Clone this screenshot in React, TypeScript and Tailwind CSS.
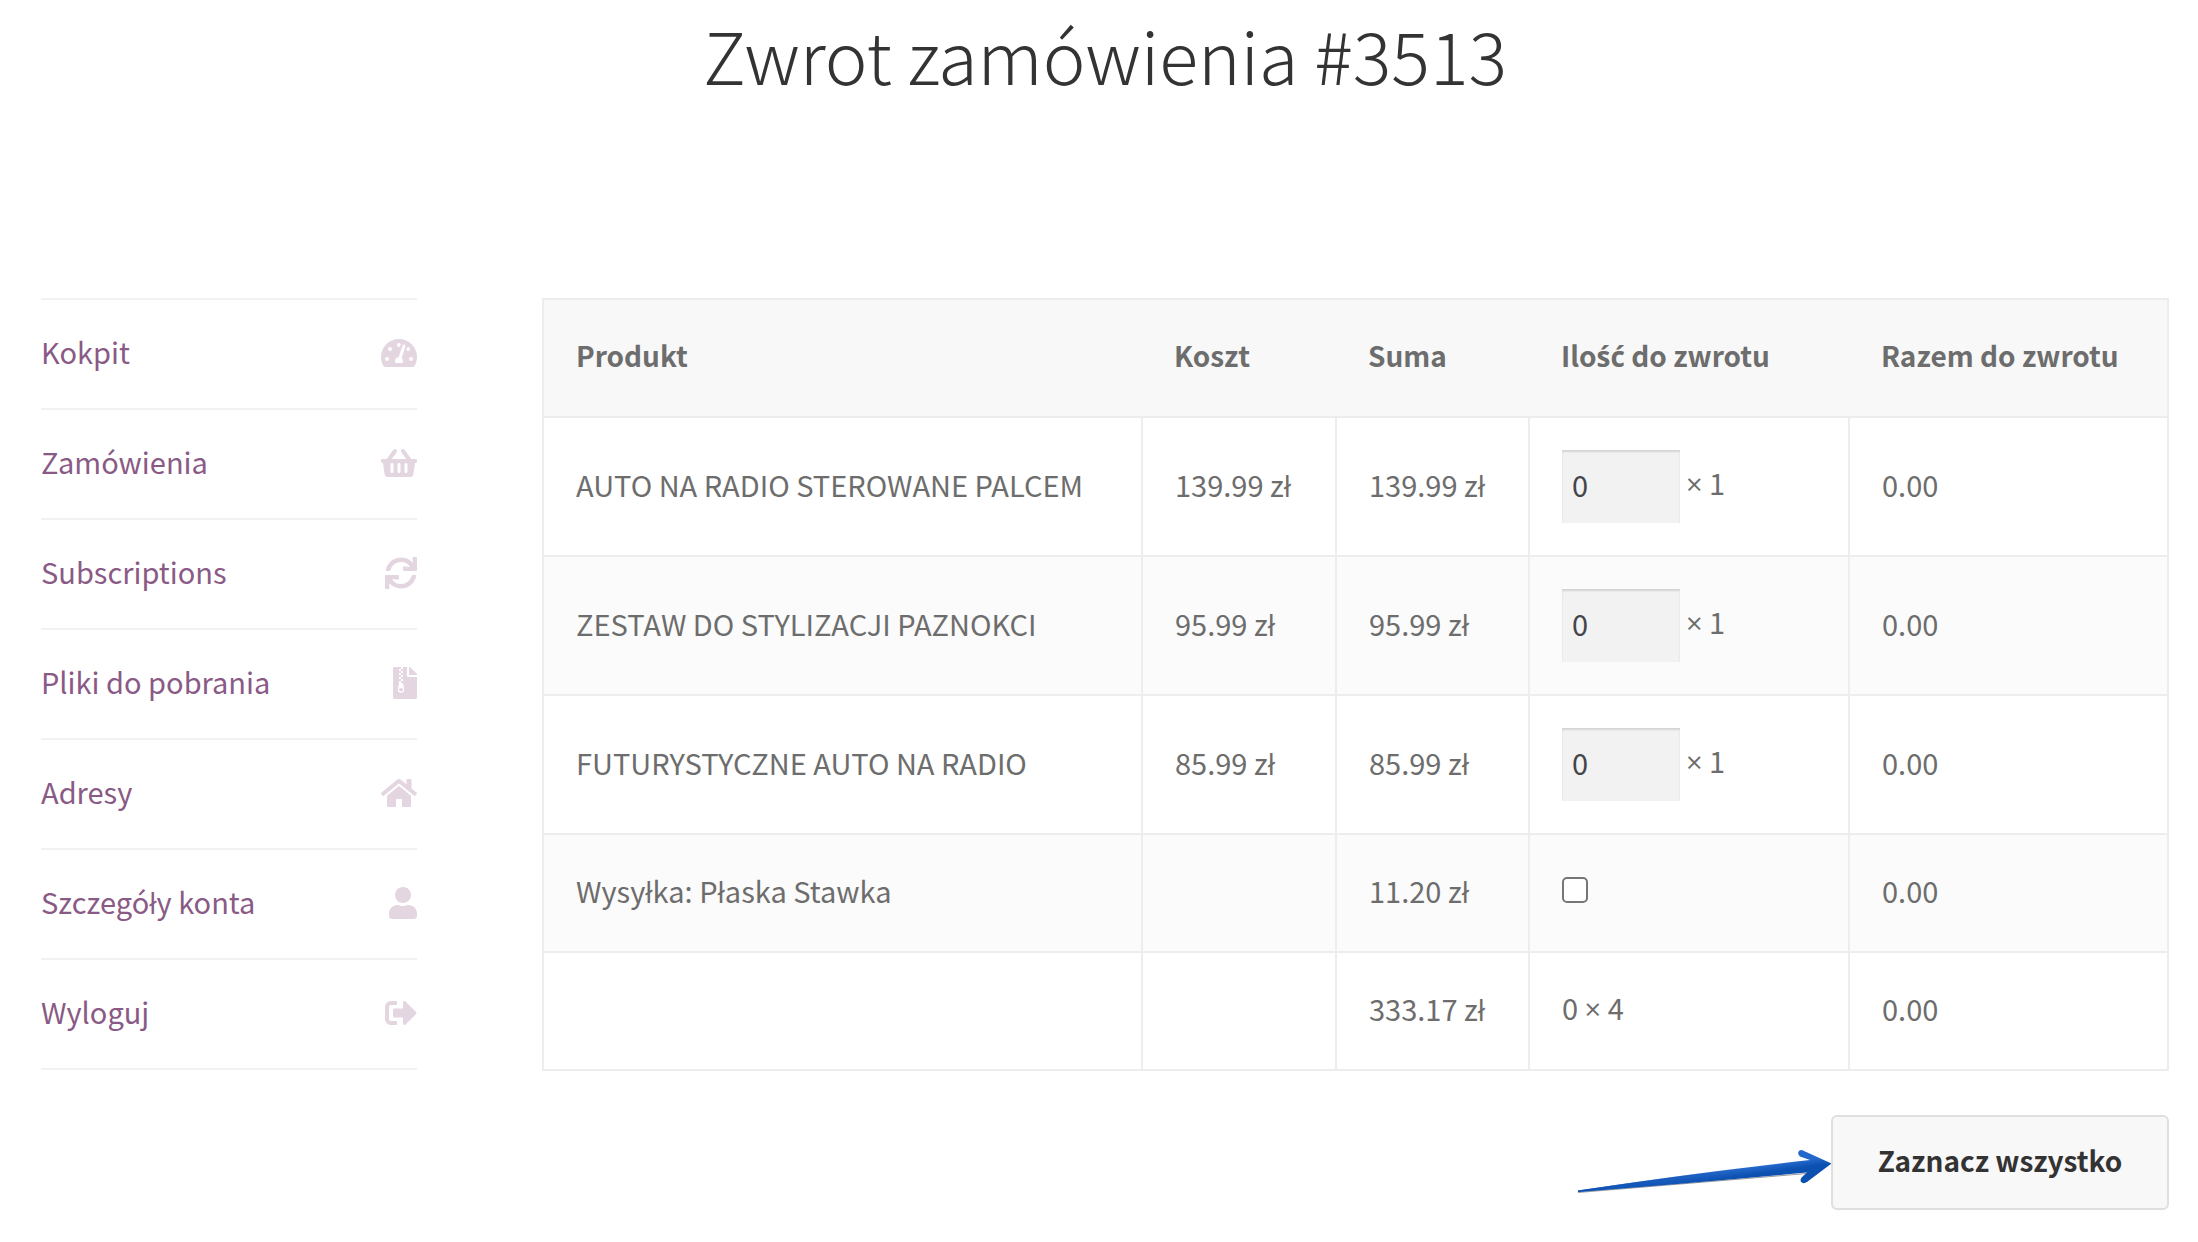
import { useState } from "react";
import {
  FaTachometerAlt,
  FaShoppingBasket,
  FaSync,
  FaFileArchive,
  FaHome,
  FaUser,
  FaSignOutAlt,
} from "react-icons/fa";

const menu = [
  { label: "Kokpit", icon: FaTachometerAlt, width: "w-9" },
  { label: "Zamówienia", icon: FaShoppingBasket, width: "w-9" },
  { label: "Subscriptions", icon: FaSync, width: "w-8" },
  { label: "Pliki do pobrania", icon: FaFileArchive, width: "w-6" },
  { label: "Adresy", icon: FaHome, width: "w-9" },
  { label: "Szczegóły konta", icon: FaUser, width: "w-7" },
  { label: "Wyloguj", icon: FaSignOutAlt, width: "w-8" },
];

const products = [
  { id: 1, name: "AUTO NA RADIO STEROWANE PALCEM", price: "139.99 zł" },
  { id: 2, name: "ZESTAW DO STYLIZACJI PAZNOKCI", price: "95.99 zł" },
  { id: 3, name: "FUTURYSTYCZNE AUTO NA RADIO", price: "85.99 zł" },
];

const cell = "border-2 border-[#ededed] px-8 pb-1.5 text-left";
const head =
  "border-y-2 border-[#ededed] px-8 pb-1.5 text-left text-[28px] font-bold first:border-l-2 last:border-r-2";

function AccountMenu() {
  return (
    <nav className="w-[376px] shrink-0">
      <ul className="border-t-2 border-[#f2f2f2]">
        {menu.map(({ label, icon: Icon, width }) => (
          <li key={label} className="border-b-2 border-[#f2f2f2]">
            <a
              href="#"
              className="flex h-[108px] items-center justify-between pb-0.5 text-[#8a5a86]"
            >
              <span className="pb-1">{label}</span>
              <Icon className={`h-8 ${width} text-[#e3d6e1]`} />
            </a>
          </li>
        ))}
      </ul>
    </nav>
  );
}

// the CJK face draws × full width, so take the sign from Open Sans
function Times() {
  return <span className="font-['Open_Sans',sans-serif]">×</span>;
}

function Arrow() {
  return (
    <svg width="256" height="95" viewBox="0 0 256 95" aria-hidden="true" className="overflow-visible">
      <defs>
        <linearGradient id="arrow" gradientUnits="userSpaceOnUse" x1="204" y1="46" x2="206" y2="60">
          <stop offset="0.2" stopColor="#2468cc" />
          <stop offset="0.7" stopColor="#0c50b0" />
        </linearGradient>
        <linearGradient id="shaft" x1="0" y1="0" x2="1" y2="0">
          <stop offset="0" stopColor="#0c50b0" />
          <stop offset="1" stopColor="#0c50b0" stopOpacity="0" />
        </linearGradient>
      </defs>
      <path d="M3 77.500 L232 58.500" stroke="#555555" strokeOpacity="0.6" strokeWidth="1" />
      <path
        d="M3 75.500 Q120 58 235 45 L225 41.500 Q221.500 38 224.500 35.500 Q226.500 34.300 229 36 L256.500 48.500 L232 67 Q228 69.500 225.800 66.500 Q225 64 227 62 L232 57.500 Q120 68 3 77 Z"
        fill="url(#arrow)"
      />
      <path d="M3 75.500 Q90 62.500 180 51 L180 62 Q90 70 3 77 Z" fill="url(#shaft)" />
    </svg>
  );
}

function RefundTable() {
  const [shipping, setShipping] = useState(false);

  return (
    <table className="w-full table-fixed border-collapse">
      <colgroup>
        <col className="w-[599px]" />
        <col className="w-[194px]" />
        <col className="w-[193px]" />
        <col className="w-[320px]" />
        <col />
      </colgroup>
      <thead>
        <tr className="h-[118px] bg-[#f8f8f8]">
          <th className={head}>Produkt</th>
          <th className={head}>Koszt</th>
          <th className={head}>Suma</th>
          <th className={head}>
            Ilo<span className="font-['Open_Sans',sans-serif]">ść</span> do zwrotu
          </th>
          <th className={head}>Razem do zwrotu</th>
        </tr>
      </thead>
      <tbody>
        {products.map((p) => (
          <tr key={p.id} className="h-[139px] even:bg-[#fbfbfb]">
            <td className={cell}>{p.name}</td>
            <td className={cell}>{p.price}</td>
            <td className={cell}>{p.price}</td>
            <td className="border-2 border-[#ededed] px-8">
              <label className="flex items-center gap-1.5">
                <input
                  type="text"
                  inputMode="numeric"
                  defaultValue="0"
                  className="h-[73px] w-[118px] bg-[#f2f2f2] px-2.5 pb-1.5 text-[#43454b] shadow-[inset_0_2px_2px_rgba(0,0,0,0.125)]"
                />
                <span className="pb-2">
                  <Times /> 1
                </span>
              </label>
            </td>
            <td className={cell}>0.00</td>
          </tr>
        ))}
        <tr className="h-[118px] even:bg-[#fbfbfb]">
          <td className={cell}>
            <label htmlFor="shipping">Wysyłka: Płaska Stawka</label>
          </td>
          <td className={cell}></td>
          <td className={cell}>11.20 zł</td>
          <td className={cell}>
            <input
              id="shipping"
              type="checkbox"
              checked={shipping}
              onChange={(e) => setShipping(e.target.checked)}
              className="block size-[26px] appearance-none rounded-[5px] border-2 border-[#767676] bg-white checked:bg-[#8a5a86]"
            />
          </td>
          <td className={cell}>0.00</td>
        </tr>
        <tr className="h-[118px]">
          <td className={cell}></td>
          <td className={cell}></td>
          <td className={cell}>333.17 zł</td>
          <td className={cell}>
            0 <Times /> 4
          </td>
          <td className={cell}>0.00</td>
        </tr>
      </tbody>
    </table>
  );
}

export default function App() {
  return (
    <main className="min-h-screen bg-white pr-[29px] pl-[41px] font-['Noto_Sans_CJK_JP','Open_Sans',sans-serif] text-[29px] leading-[48px] text-[#6d6d6d]">
      <h1 className="pt-1 text-center text-[72px] leading-[100px] font-light text-[#333333]">
        Zwrot zamówienia #3513
      </h1>
      <div className="mt-[194px] flex items-start gap-[125px]">
        <AccountMenu />
        <div className="min-w-0 flex-1">
          <RefundTable />
          <div className="mt-11 flex items-center justify-end">
            <Arrow />
            <button className="h-[95px] w-[338px] rounded-md border-2 border-[#dfdfdf] bg-[#f8f8f8] pb-1.5 text-[28px] font-bold text-[#333333]">
              Zaznacz wszystko
            </button>
          </div>
        </div>
      </div>
    </main>
  );
}
